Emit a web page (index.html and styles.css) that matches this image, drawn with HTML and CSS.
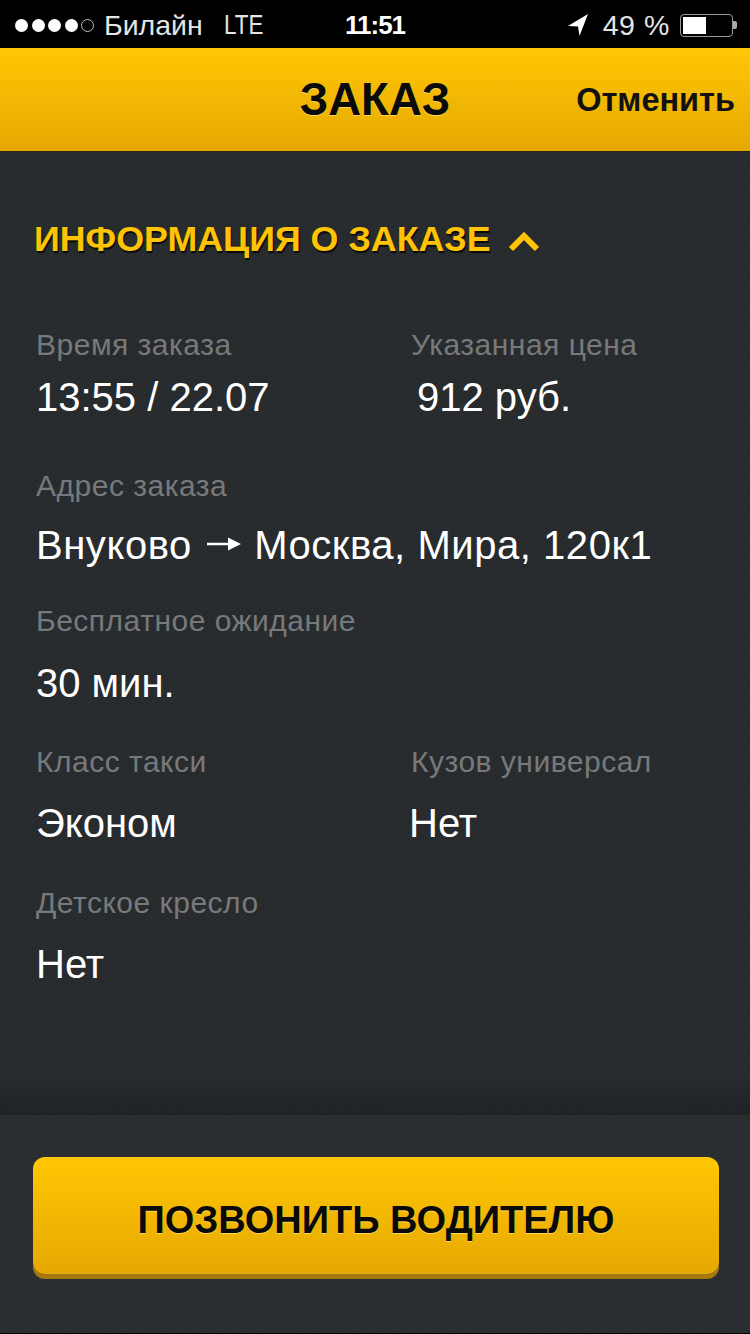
FILE: index.html
```html
<!DOCTYPE html>
<html lang="en">
<head>
    <meta charset="UTF-8">
    <meta name="viewport" content="width=device-width, initial-scale=1.0">
    <title>Заказ</title>
    <link rel="stylesheet" href="styles.css">
</head>
<body>
    <div class="page">
        <div class="status-bar">
            <div class="status-left">
                <div class="signal">
                    <span class="dot"></span>
                    <span class="dot"></span>
                    <span class="dot"></span>
                    <span class="dot"></span>
                    <span class="dot dot-empty"></span>
                </div>
                <span class="carrier">Билайн</span>
                <span class="network">LTE</span>
            </div>
            <div class="clock">11:51</div>
            <div class="status-right">
                <svg class="location" width="22" height="24" viewBox="0 0 22 24">
                    <path d="M21 1 L1 13 L11 13.500 L12.500 23 Z" fill="#fff"/>
                </svg>
                <span class="percent">49 %</span>
                <div class="battery"><div class="battery-level"></div></div>
                <div class="battery-nib"></div>
            </div>
        </div>

        <div class="nav-bar">
            <h1 class="nav-title">ЗАКАЗ</h1>
            <a class="nav-cancel">Отменить</a>
        </div>

        <div class="main">
            <div class="section-title">
                <span>ИНФОРМАЦИЯ О ЗАКАЗЕ</span>
                <svg class="chevron" width="32" height="22" viewBox="0 0 32 22">
                    <path d="M3 18 L16 5 L29 18" fill="none" stroke="#fec304" stroke-width="6"/>
                </svg>
            </div>

            <div class="row row-time">
                <div class="field">
                    <div class="label">Время заказа</div>
                    <div class="value">13:55 / 22.07</div>
                </div>
                <div class="field">
                    <div class="label">Указанная цена</div>
                    <div class="value value-price">912 руб.</div>
                </div>
            </div>

            <div class="row row-route">
                <div class="field field-wide">
                    <div class="label">Адрес заказа</div>
                    <div class="value">
                        Внуково
                        <svg class="route-arrow" width="34" height="16" viewBox="0 0 34 16">
                            <path d="M0 6.700 H22 V9.300 H0 Z M21 1.500 L34 8 L21 14.500 Z" fill="#fff"/>
                        </svg>
                        Москва, Мира, 120к1
                    </div>
                </div>
            </div>

            <div class="row row-wait">
                <div class="field field-wide">
                    <div class="label">Бесплатное ожидание</div>
                    <div class="value">30 мин.</div>
                </div>
            </div>

            <div class="row">
                <div class="field">
                    <div class="label">Класс такси</div>
                    <div class="value">Эконом</div>
                </div>
                <div class="field">
                    <div class="label">Кузов универсал</div>
                    <div class="value value-body">Нет</div>
                </div>
            </div>

            <div class="row">
                <div class="field field-wide">
                    <div class="label">Детское кресло</div>
                    <div class="value">Нет</div>
                </div>
            </div>
        </div>

        <div class="footer">
            <button class="btn">ПОЗВОНИТЬ ВОДИТЕЛЮ</button>
        </div>
    </div>
</body>
</html>
```

FILE: styles.css
```css
body {
    font-family: "Liberation Sans", Arial, sans-serif;
    background-color: #000;
    margin: 0;
    padding: 0;
}
.page {
    width: 750px;
    height: 1334px;
    display: flex;
    flex-direction: column;
    overflow: hidden;
}

/* status bar */
.status-bar {
    height: 48px;
    background: #000;
    color: #e4e4e4;
    font-size: 28.500px;
    display: flex;
    align-items: center;
    justify-content: space-between;
    padding: 2px 13px 0 15px;
    box-sizing: border-box;
    position: relative;
}
.status-left, .status-right {
    display: flex;
    align-items: center;
}
.signal {
    display: flex;
    gap: 3.500px;
    margin-right: 10px;
}
.dot {
    width: 13px;
    height: 13px;
    border-radius: 50%;
    background: #fff;
    box-sizing: border-box;
}
.dot-empty {
    background: none;
    border: 1px solid #bbb;
}
.network {
    margin-left: 21px;
    font-size: 28px;
    transform: scaleX(0.8);
    transform-origin: left center;
}
.clock {
    position: absolute;
    left: 345px;
    top: 10px;
    color: #fff;
    font-size: 26px;
    font-weight: bold;
    letter-spacing: -1px;
    line-height: 30px;
}
.location {
    margin-right: 14px;
}
.percent {
    margin-right: 10px;
    letter-spacing: 0.6px;
}
.battery {
    width: 53px;
    height: 23px;
    border: 1px solid #999;
    border-radius: 4px;
    box-sizing: border-box;
    padding: 2px;
}
.battery-level {
    width: 23px;
    height: 100%;
    background: #fff;
}
.battery-nib {
    width: 4px;
    height: 8px;
    background: #aaa;
    border-radius: 0 2px 2px 0;
}

/* nav bar */
.nav-bar {
    height: 103px;
    background: linear-gradient(to bottom, #ffc704, #e6a802);
    border-bottom: 1px solid #2a2517;
    position: relative;
    display: flex;
    align-items: center;
    justify-content: center;
}
.nav-title {
    margin: 0;
    font-size: 45.500px;
    font-weight: bold;
    color: #0a0a0a;
    text-shadow: 0 1px 0 rgba(255, 232, 120, 0.7);
}
.nav-cancel {
    position: absolute;
    right: 15px;
    top: 34px;
    font-size: 32.500px;
    line-height: 36px;
    font-weight: bold;
    color: #111;
}

/* info */
.main {
    flex: 1;
    padding: 67px 0 0 36px;
    background:
        linear-gradient(to bottom, transparent calc(100% - 40px), rgba(0, 0, 0, 0.2)),
        repeating-linear-gradient(135deg, #292d30 0, #292d30 2px, #272a2d 2px, #272a2d 4px);
}
.section-title {
    display: flex;
    align-items: center;
    margin: 0 0 66px -2px;
    font-size: 35.800px;
    line-height: 40px;
    font-weight: bold;
    color: #fec304;
    text-shadow: 1px 2px 1px rgba(0, 0, 0, 0.8);
}
.chevron {
    margin: 6px 0 0 17px;
}
.row {
    display: grid;
    grid-template-columns: 375px 1fr;
    margin-bottom: 38px;
}
.field-wide {
    grid-column: 1 / -1;
}
.label {
    font-size: 30px;
    letter-spacing: 0.5px;
    line-height: 40px;
    color: #77797b;
}
.value {
    margin-top: 19px;
    font-size: 40px;
    line-height: 44px;
    color: #fff;
}
.row-time {
    margin-bottom: 47px;
}
.row-time .value {
    margin-top: 10px;
}
.row-route {
    margin-bottom: 34px;
}
.row-route .value {
    margin-top: 17px;
    letter-spacing: 0.55px;
}
.row-wait {
    margin-bottom: 37px;
}
.row-wait .value {
    margin-top: 20px;
}
.value-price {
    padding-left: 6px;
}
.value-body {
    margin-left: -2px;
}
.route-arrow {
    margin: 0 2px 0 3px;
    vertical-align: 7px;
}

/* bottom button */
.footer {
    height: 219px;
    box-sizing: border-box;
    padding: 42px 31px 0 33px;
    border-bottom: 1px solid #000;
    background: repeating-linear-gradient(135deg, #2c3033 0, #2c3033 2px, #292d30 2px, #292d30 4px);
}
.btn {
    display: block;
    width: 100%;
    height: 117px;
    padding: 10px 0 0;
    background: linear-gradient(to bottom, #ffc704, #e6a802);
    color: #0a0a0a;
    border: none;
    border-radius: 12px;
    box-shadow: 0 5px 0 #a67a10;
    font-family: inherit;
    font-size: 38px;
    font-weight: bold;
    text-shadow: 0 1px 0 rgba(255, 232, 120, 0.7);
}
```
